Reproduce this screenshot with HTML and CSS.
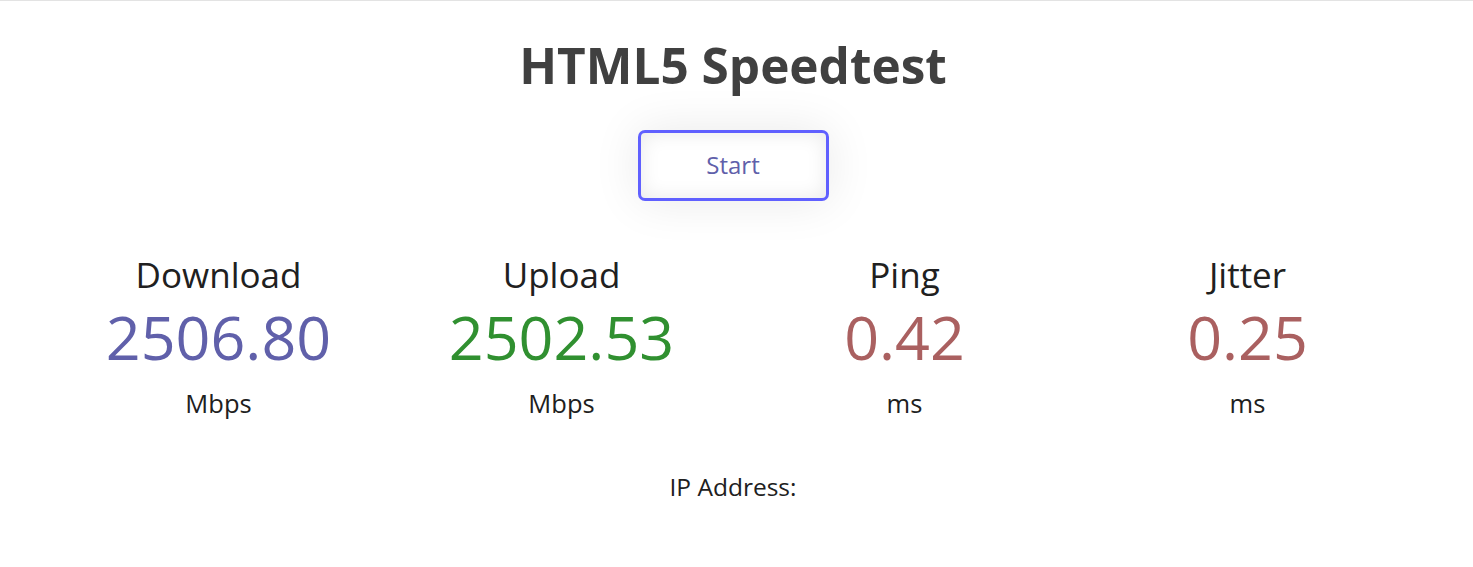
FILE: index.html
```html
<!DOCTYPE html>
<html>
<head>
<meta charset="utf-8">
<title>HTML5 Speedtest</title>
<link rel="stylesheet" href="styles.css">
</head>
<body>
<div class="page">
  <h1 class="title">HTML5 Speedtest</h1>
  <div class="start-wrap"><button class="start">Start</button></div>
  <div class="tests">
    <div class="test">
      <div class="name">Download</div>
      <div class="value dl">2506.80</div>
      <div class="unit">Mbps</div>
    </div>
    <div class="test">
      <div class="name">Upload</div>
      <div class="value ul">2502.53</div>
      <div class="unit">Mbps</div>
    </div>
    <div class="test">
      <div class="name">Ping</div>
      <div class="value ms">0.42</div>
      <div class="unit">ms</div>
    </div>
    <div class="test">
      <div class="name">Jitter</div>
      <div class="value ms">0.25</div>
      <div class="unit">ms</div>
    </div>
  </div>
  <div class="ip">IP Address: </div>
</div>
</body>
</html>
```
FILE: styles.css
```css
html, body {
  margin: 0;
  padding: 0;
  background: #ffffff;
}
body {
  border-top: 1px solid #e3e3e3;
  font-family: "Open Sans", "Noto Sans", sans-serif;
  color: #202020;
}
.page {
  padding-right: 7px;
  text-align: center;
}
.title {
  margin: 0;
  padding-top: 32px;
  font-size: 49.5px;
  line-height: 64px;
  font-weight: 700;
  color: #404040;
}
.start-wrap {
  display: flex;
  justify-content: center;
  padding-top: 33px;
}
.start {
  width: 191px;
  height: 71px;
  box-sizing: border-box;
  padding: 0 0 3px 0;
  border: 3px solid #6060ff;
  border-radius: 7px;
  background: #ffffff;
  color: #6060aa;
  font-family: inherit;
  font-size: 24px;
  box-shadow: 0 0 48px rgba(0, 0, 0, 0.09), inset 0 0 20px rgba(0, 0, 0, 0.09);
  cursor: pointer;
}
.tests {
  display: grid;
  grid-template-columns: repeat(4, 343px);
  justify-content: center;
  padding-top: 54px;
}
.test {
  display: flex;
  flex-direction: column;
  align-items: center;
}
.name {
  font-size: 35px;
  line-height: 40px;
}
.value {
  font-size: 61px;
  line-height: 84px;
}
.dl { color: #6060aa; }
.ul { color: #309030; }
.ms { color: #aa6060; }
.unit {
  font-size: 25.5px;
  line-height: 48px;
}
.ip {
  padding-top: 44px;
  font-size: 24.5px;
  line-height: 32px;
}
```
